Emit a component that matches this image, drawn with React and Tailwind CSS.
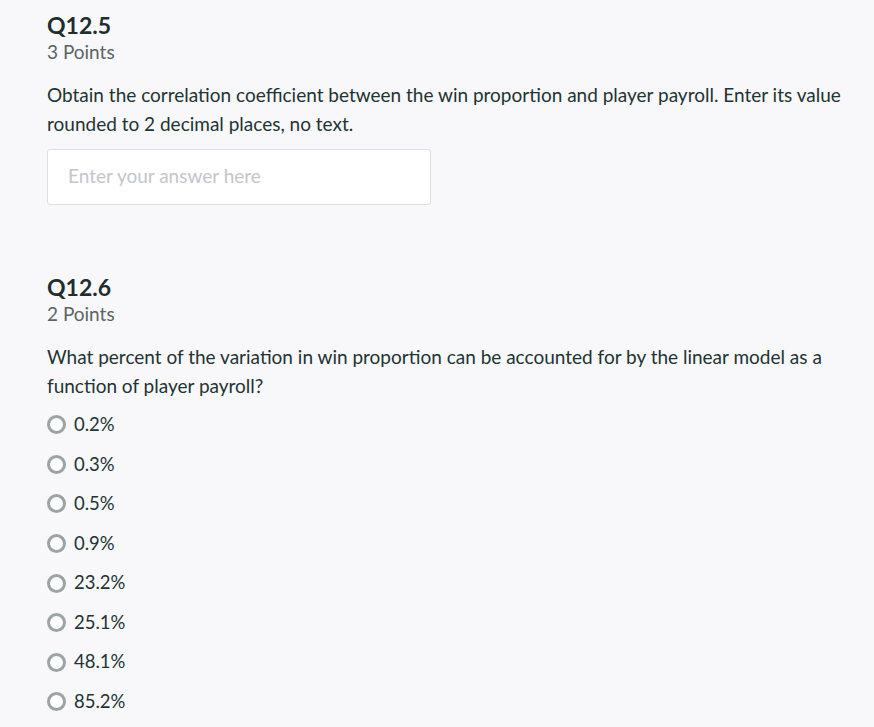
import React from "react";

const options = ["0.2%", "0.3%", "0.5%", "0.9%", "23.2%", "25.1%", "48.1%", "85.2%"];

const Radio = ({ label }) => (
    <label className="flex items-center h-[39.6px] cursor-pointer">
        <span className="w-[19px] h-[19px] rounded-full border-[3px] border-[#9ca3a3] bg-white mr-[8px] shrink-0" />
        <span className="text-[18.5px] text-[#223333]">{label}</span>
    </label>
);

const App = () => {
    return (
        <div
            className="min-h-[727px] bg-[#f8f8fa] pl-[47px] pr-[20px] pt-[10px] text-[#223333]"
            style={{ fontFamily: "Lato, 'Liberation Sans', sans-serif" }}
        >
            {/* Q12.5 */}
            <div>
                <h2 className="text-[23px] font-bold leading-[30px] text-[#1f2d2d]">Q12.5</h2>
                <div className="text-[19px] leading-[24px] text-[#5a6464]">3 Points</div>
                <p className="mt-[16px] text-[19px] leading-[29px] max-w-[810px]">
                    Obtain the correlation coefficient between the win proportion and player payroll. Enter its value
                    rounded to 2 decimal places, no text.
                </p>
                <input
                    type="text"
                    placeholder="Enter your answer here"
                    className="mt-[11px] w-[384px] h-[56px] bg-white border border-[#dcdfe6] rounded-[3px] px-[20px] pb-[3px] text-[19px] placeholder:text-[#c2c6cc] outline-none"
                />
            </div>

            {/* Q12.6 */}
            <div className="mt-[67px]">
                <h2 className="text-[23px] font-bold leading-[30px] text-[#1f2d2d]">Q12.6</h2>
                <div className="text-[19px] leading-[24px] text-[#5a6464]">2 Points</div>
                <p className="mt-[16px] text-[19px] leading-[29px] max-w-[810px]">
                    What percent of the variation in win proportion can be accounted for by the linear model as a
                    function of player payroll?
                </p>
                <div className="mt-[5px]">
                    {options.map((o) => (
                        <Radio key={o} label={o} />
                    ))}
                </div>
            </div>
        </div>
    );
};

export default App;
